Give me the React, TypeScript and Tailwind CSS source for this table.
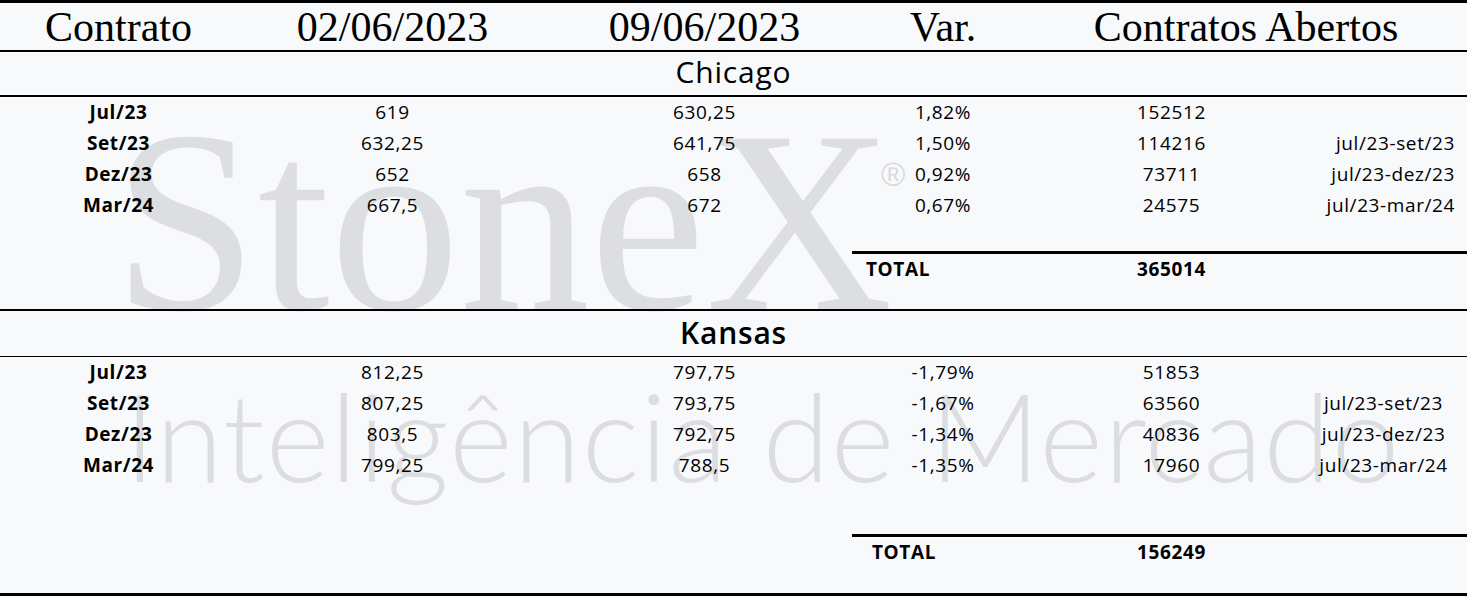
const cols = "grid grid-cols-[237px_311px_313px_164px_293px_149px]";

type Row = { c: string; a: string; b: string; v: string; oi: string; s?: string };

const chicago: Row[] = [
  { c: "Jul/23", a: "619", b: "630,25", v: "1,82%", oi: "152512" },
  { c: "Set/23", a: "632,25", b: "641,75", v: "1,50%", oi: "114216", s: "jul/23-set/23" },
  { c: "Dez/23", a: "652", b: "658", v: "0,92%", oi: "73711", s: "jul/23-dez/23" },
  { c: "Mar/24", a: "667,5", b: "672", v: "0,67%", oi: "24575", s: "jul/23-mar/24" },
];

const kansas: Row[] = [
  { c: "Jul/23", a: "812,25", b: "797,75", v: "-1,79%", oi: "51853" },
  { c: "Set/23", a: "807,25", b: "793,75", v: "-1,67%", oi: "63560", s: "jul/23-set/23" },
  { c: "Dez/23", a: "803,5", b: "792,75", v: "-1,34%", oi: "40836", s: "jul/23-dez/23" },
  { c: "Mar/24", a: "799,25", b: "788,5", v: "-1,35%", oi: "17960", s: "jul/23-mar/24" },
];

function DataRow({ r, centerSpread }: { r: Row; centerSpread?: boolean }) {
  return (
    <div className={cols + " h-[31px] items-center text-center"}>
      <div className="font-bold">{r.c}</div>
      <div>{r.a}</div>
      <div>{r.b}</div>
      <div>{r.v}</div>
      <div>{r.oi}</div>
      <div className={centerSpread ? "text-center pr-[18px]" : "text-right pr-[12px]"}>{r.s}</div>
    </div>
  );
}

function TotalRow({ value, pad }: { value: string; pad: string }) {
  return (
    <div className={cols}>
      <div className="col-start-4 col-span-3 ml-[-9px] border-t-[3px] border-black grid grid-cols-[173px_293px_149px] h-[34px] items-center font-bold">
        <div className={pad}>TOTAL</div>
        <div className="text-center">{value}</div>
        <div />
      </div>
    </div>
  );
}

export default function App() {
  return (
    <div className="relative w-[1467px] h-[597px] overflow-hidden bg-[#f8f9fb] text-black font-['Open_Sans',sans-serif] text-[19px] tracking-[0.6px]">
      {/* watermark */}
      <div className="absolute left-[113px] top-[91px] text-[260px] leading-none text-[#dddee1] font-['Liberation_Serif',serif] tracking-normal pointer-events-none">
        StoneX
      </div>
      <div className="absolute left-[881px] top-[158px] text-[33px] leading-none text-[#d9dadd] font-['Liberation_Sans',sans-serif] tracking-normal">
        ®
      </div>
      <div className="absolute left-[124px] top-[374px] text-[122px] leading-none text-[#dcdde0] font-['Lato',sans-serif] font-light tracking-[1px] whitespace-nowrap pointer-events-none">
        Inteligência de Mercado
      </div>

      <div className="relative">
        {/* header */}
        <div className={cols + " h-[52px] border-t-[3px] border-b-2 border-black items-center text-center font-['Liberation_Serif',serif] text-[42px] leading-none tracking-normal"}>
          <div>Contrato</div>
          <div>02/06/2023</div>
          <div>09/06/2023</div>
          <div>Var.</div>
          <div className="col-span-2">Contratos Abertos</div>
        </div>

        {/* Chicago */}
        <div className="h-[45px] pb-[5px] border-b-2 border-black flex items-center justify-center text-[30px] tracking-[0.8px]">
          Chicago
        </div>
        {chicago.map((r) => (
          <DataRow key={r.c} r={r} />
        ))}
        <div className="h-[30px]" />
        <TotalRow value="365014" pad="pl-[14px]" />
        <div className="h-[26px] border-b-2 border-black" />

        {/* Kansas */}
        <div className="h-[46px] pb-[2px] border-b border-black flex items-center justify-center text-[30px] font-semibold tracking-[0.8px]">
          Kansas
        </div>
        {kansas.map((r) => (
          <DataRow key={r.c} r={r} centerSpread />
        ))}
        <div className="h-[53px]" />
        <TotalRow value="156249" pad="pl-[20px]" />
        <div className="h-[28px] border-b-[3px] border-black" />
      </div>
    </div>
  );
}
